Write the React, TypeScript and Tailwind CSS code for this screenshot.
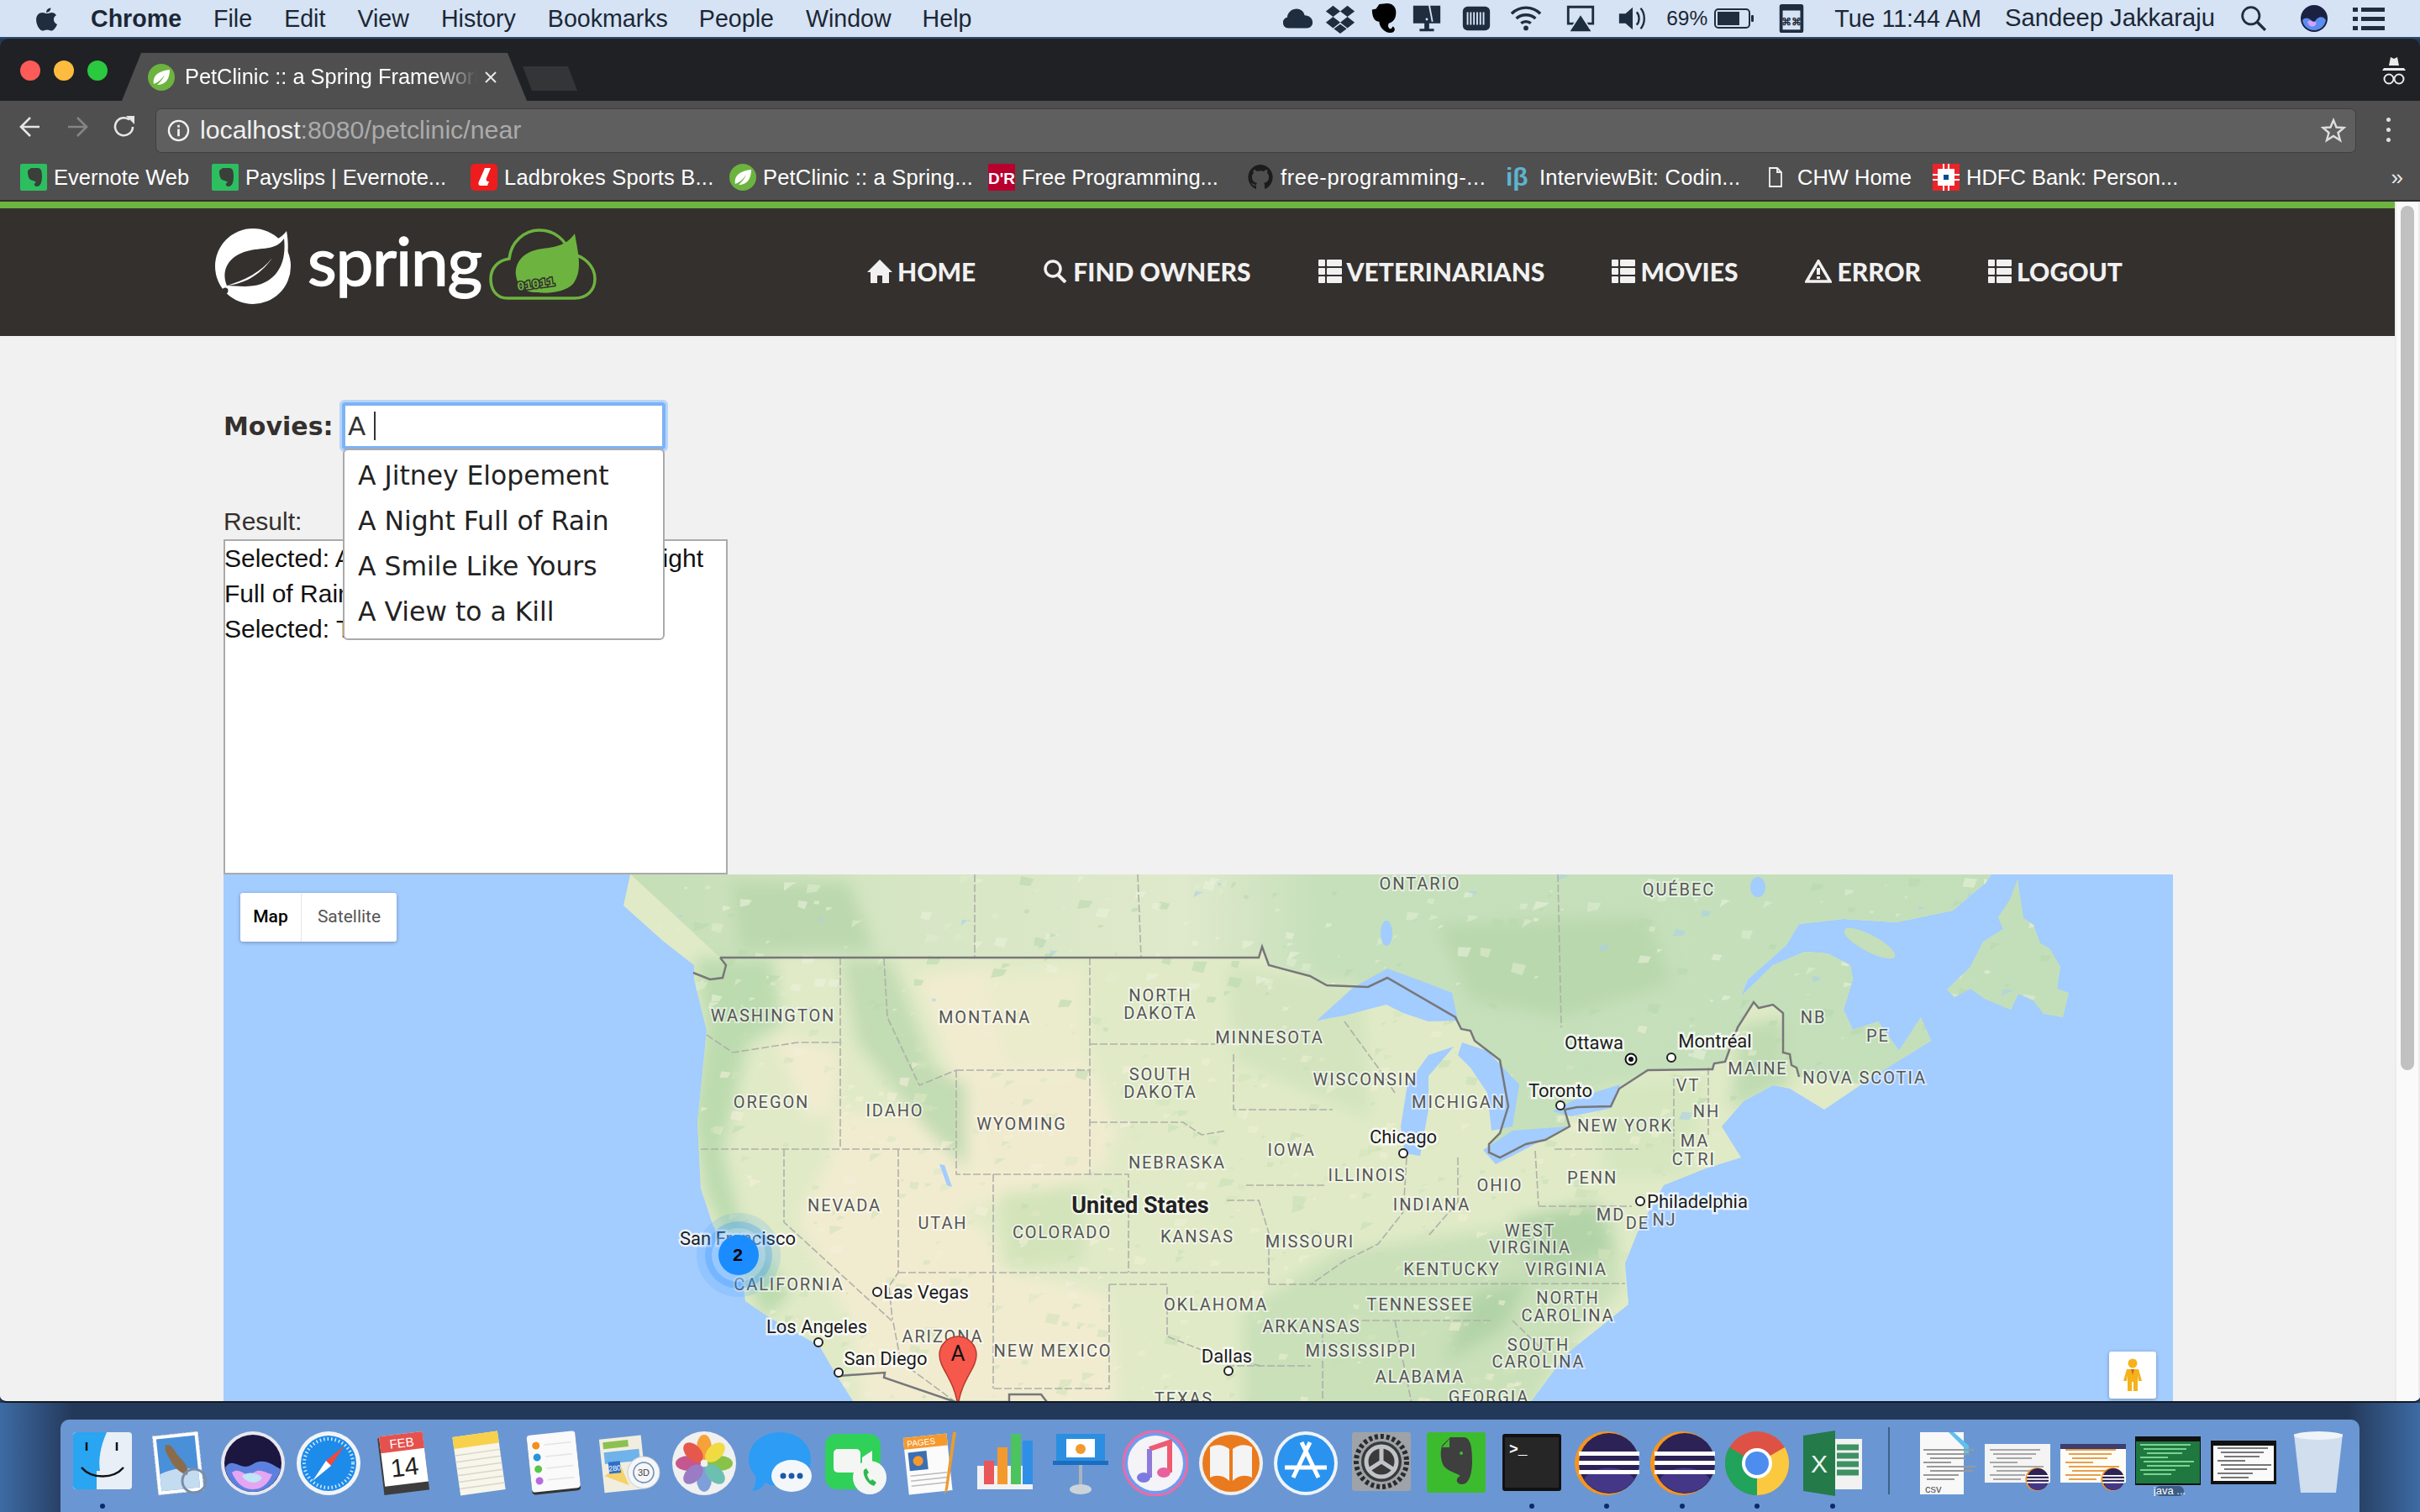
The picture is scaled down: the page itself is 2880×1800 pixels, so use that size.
import React from "react";

const LAND = "M750,1040 L742,1077 L790,1120 L826,1148 L826,1165 L841,1226 L830,1336 L834,1414 L849,1459 L880,1495 L887,1548 L918,1569 L975,1601 L994,1634 L1017,1670 L1820,1670 L1865,1610 L1938,1552 L1934,1503 L1950,1463 L1980,1410 L2030,1390 L2072,1377 L2049,1340 L2075,1310 L2110,1291 L2130,1295 L2171,1320 L2230,1280 L2298,1238 L2286,1210 L2260,1250 L2235,1215 L2205,1225 L2194,1201 L2205,1165 L2202,1148 L2175,1134 L2148,1132 L2110,1148 L2072,1185 L2080,1165 L2126,1124 L2141,1099 L2194,1093 L2256,1097 L2324,1083 L2363,1050 L2370,1040 Z";
const NEWF = "M2401,1046 L2392,1070 L2378,1091 L2384,1105 L2360,1120 L2345,1150 L2317,1177 L2326,1186 L2345,1176 L2362,1188 L2393,1201 L2402,1182 L2420,1190 L2432,1206 L2455,1210 L2462,1181 L2448,1176 L2452,1150 L2439,1128 L2428,1122 L2420,1100 L2408,1092 Z";
const BORDER = "857,1139 1498,1139 1502,1126 1510,1148 1559,1161 1579,1172 1628,1174 1651,1163 1732,1210 1739,1224 1750,1226 1755,1238 1785,1261 1795,1316 1785,1348 1772,1361 1772,1371 1785,1377 1816,1361 1839,1356 1868,1340 1862,1320 1877,1317 1917,1316 1927,1295 1961,1273 2038,1272 2040,1265 2053,1263 2068,1222 2087,1192 2093,1199 2110,1195 2122,1205 2122,1252 2130,1254 2132,1267 2138,1270 2141,1281";
const DASHED = [
  "841,1231 872,1252 949,1240 1002,1240",
  "1000,1139 1000,1367",
  "834,1367 1136,1367",
  "933,1367 933,1454 1063,1573 1072,1620 1137,1668",
  "1069,1367 1069,1514 1058,1530 1062,1570",
  "1182,1397 1182,1652",
  "1138,1273 1138,1397 1343,1397 1343,1514",
  "1138,1273 1297,1273",
  "1297,1139 1297,1397",
  "1069,1514 1460,1514",
  "1320,1528 1320,1652 1182,1652",
  "1320,1528 1389,1528 1389,1590 1440,1610 1500,1625",
  "1297,1242 1460,1242",
  "1297,1335 1408,1335 1430,1350 1460,1345",
  "1052,1140 1056,1210 1094,1291 1138,1273",
  "1160,1040 1160,1139",
  "1354,1040 1358,1139",
  "1468,1254 1468,1320 1586,1320",
  "1483,1410 1579,1410",
  "1460,1428 1498,1428 1510,1467 1510,1528",
  "1460,1514 1510,1514",
  "1510,1528 1934,1527",
  "1621,1571 1774,1571",
  "1460,1625 1560,1625",
  "1735,1377 1735,1430 1700,1470",
  "1674,1377 1670,1442 1640,1480 1600,1500 1560,1528",
  "1827,1369 1831,1434",
  "1850,1367 1950,1367",
  "1831,1435 1942,1435",
  "1992,1283 1992,1381",
  "2033,1270 2033,1350",
  "1854,1040 1858,1222",
  "1600,1215 1640,1270 1660,1300",
  "1574,1571 1574,1670",
  "1660,1571 1680,1670",
  "1800,1571 1840,1610",
];
const LABELS: [string, number, number][] = [
  ["ONTARIO", 1690, 1051], ["QUÉBEC", 1998, 1058], ["WASHINGTON", 920, 1208], ["MONTANA", 1172, 1210], ["NORTH", 1381, 1184], ["DAKOTA", 1381, 1205], ["MINNESOTA", 1511, 1234], ["WISCONSIN", 1625, 1284], ["MICHIGAN", 1736, 1311], ["OREGON", 918, 1311], ["IDAHO", 1065, 1321], ["SOUTH", 1381, 1278], ["DAKOTA", 1381, 1299], ["WYOMING", 1216, 1337], ["NEBRASKA", 1401, 1383], ["IOWA", 1537, 1368], ["ILLINOIS", 1627, 1398], ["OHIO", 1785, 1410], ["INDIANA", 1704, 1433], ["PENN", 1895, 1401], ["NEVADA", 1005, 1434], ["UTAH", 1122, 1455], ["COLORADO", 1264, 1466], ["KANSAS", 1425, 1471], ["MISSOURI", 1559, 1477], ["WEST", 1821, 1464], ["VIRGINIA", 1821, 1484], ["MD", 1917, 1445], ["DE", 1949, 1455], ["NJ", 1981, 1451], ["KENTUCKY", 1728, 1510], ["VIRGINIA", 1864, 1510], ["OKLAHOMA", 1447, 1552], ["TENNESSEE", 1690, 1552], ["NORTH", 1866, 1544], ["CAROLINA", 1866, 1565], ["ARKANSAS", 1561, 1578], ["MISSISSIPPI", 1620, 1607], ["ALABAMA", 1690, 1638], ["SOUTH", 1831, 1600], ["CAROLINA", 1831, 1620], ["GEORGIA", 1772, 1662], ["TEXAS", 1409, 1664], ["NEW MEXICO", 1253, 1607], ["ARIZONA", 1122, 1590], ["CALIFORNIA", 939, 1528], ["NB", 2158, 1210], ["PE", 2235, 1232], ["NOVA SCOTIA", 2219, 1282], ["MAINE", 2092, 1271], ["VT", 2009, 1291], ["NH", 2031, 1322], ["NEW YORK", 1934, 1339], ["MA", 2017, 1357], ["CT", 2004, 1379], ["RI", 2031, 1379],
];
const CITIES: [string, number, number][] = [
  ["Ottawa", 1897, 1240], ["Montréal", 2041, 1238], ["Toronto", 1857, 1297], ["Chicago", 1670, 1352], ["Philadelphia", 2020, 1429], ["San Francisco", 878, 1473], ["Las Vegas", 1102, 1537], ["Los Angeles", 972, 1578], ["San Diego", 1054, 1616], ["Dallas", 1460, 1613],
];
const DOTS: [number, number][] = [[1989, 1258], [1857, 1315], [1670, 1372], [1952, 1429], [1044, 1537], [974, 1597], [998, 1633], [1462, 1631]];

let seed = 12345;
const rnd = () => {
  seed = (seed * 16807) % 2147483647;
  return seed / 2147483647;
};
const SPECKS = Array.from({ length: 1100 }, (_, i) => {
  const x = 770 + rnd() * 1700;
  const y = 1040 + rnd() * 630;
  const s = 3 + rnd() * 13;
  const pts = `${x},${y} ${x + s},${y + s * 0.25 * rnd()} ${x + s * 0.7},${y + s * rnd()} ${x - s * 0.3 * rnd()},${y + s * 0.7}`;
  const c = y < 1200 || x > 2000 ? ["#dfeccf", "#b9d8ad", "#eaf1da", "#aad0e8"] : x < 1350 ? ["#d2e3ba", "#f3eed8", "#dde8c4", "#c3dcb2"] : ["#d4e5bd", "#ecefd2", "#c8dfb5", "#e6ebc9"];
  return { pts, c: c[i % 17 === 0 ? 3 : i % 3] };
});

const ThList = () => (
  <svg viewBox="0 0 28 28" className="w-[28px] h-[28px] fill-[#f1f1f1] shrink-0">
    <rect x="0" y="0" width="8" height="8" rx="1" /><rect x="10" y="0" width="18" height="8" rx="1" />
    <rect x="0" y="10" width="8" height="8" rx="1" /><rect x="10" y="10" width="18" height="8" rx="1" />
    <rect x="0" y="20" width="8" height="8" rx="1" /><rect x="10" y="20" width="18" height="8" rx="1" />
  </svg>
);

const NavItem = ({ icon, label }: { icon: React.ReactNode; label: string }) => (
  <div className="flex items-center gap-[6px] whitespace-nowrap text-[#f1f1f1] font-['Lato',sans-serif] font-black text-[30px] leading-none">
    {icon}
    <span>{label}</span>
  </div>
);

const Leaf = ({ className }: { className: string }) => (
  <svg viewBox="0 0 32 32" className={className}>
    <circle cx="16" cy="16" r="16" fill="#6db33f" />
    <path d="M7 24 C5 13 15 8 26 7 C26 18 21 25 11 25 C15 21 18 18 20 13 C17 18 12 22 7 24Z" fill="#ffffff" />
  </svg>
);

const Bookmark = ({ icon, label, w, ml }: { icon: React.ReactNode; label: string; w: string; ml: string }) => (
  <div className={`flex items-center gap-[8px] ${ml}`}>
    {icon}
    <span className={`whitespace-nowrap text-[25.5px] text-white ${w}`}>{label}</span>
  </div>
);

const EvernoteFav = () => (
  <svg viewBox="0 0 32 32" className="w-[32px] h-[32px] shrink-0">
    <rect width="32" height="32" rx="2" fill="#2dbe60" />
    <path d="M9 8 L13 5 H21 C25 5 26 9 26 15 C26 22 24 27 20 27 C16 27 16 23 19 22 C17 20 13 20 11 18 C9 15 9 11 9 8Z" fill="#3a3f3a" />
  </svg>
);

const Ic = ({ children }: { children: React.ReactNode }) => (
  <svg viewBox="0 0 40 40" className="w-[38px] h-[38px] fill-[#1f2d40] shrink-0">{children}</svg>
);

const Icon = ({ children }: { children: React.ReactNode }) => (
  <svg viewBox="0 0 78 78" className="w-[78px] h-[78px]">{children}</svg>
);

const DI = ({ children, dot }: { children: React.ReactNode; dot?: boolean }) => (
  <div className="w-[78px] flex flex-col items-center shrink-0">
    <Icon>{children}</Icon>
    <div className={`mt-[9px] w-[6px] h-[6px] rounded-full ${dot ? "bg-[#0c2a6b]" : "bg-transparent"}`} />
  </div>
);

const Eclipse = () => (
  <g>
    <circle cx="39" cy="39" r="38" fill="#f7941e" />
    <circle cx="42" cy="39" r="36" fill="#2c2255" />
    <path d="M12 58 A36 36 0 0 0 72 58 C60 40 24 40 12 58Z" fill="#453788" />
    <rect x="6" y="25" width="72" height="5" fill="#fff" /><rect x="6" y="36" width="72" height="5" fill="#fff" /><rect x="6" y="47" width="72" height="5" fill="#fff" />
  </g>
);

const Thumb = ({ bg, children }: { bg: string; children?: React.ReactNode }) => (
  <g>
    <rect x="0" y="16" width="78" height="46" fill={bg} />
    {children}
  </g>
);

const Lines = ({ c, x = 4 }: { c: string; x?: number }) => (
  <g fill={c}>
    {[22, 27, 32, 37, 42, 47, 52, 57].map((y, i) => (
      <rect key={y} x={x + (i % 3) * 4} y={y} width={60 - (i % 4) * 9} height="2" />
    ))}
  </g>
);

export default function App() {
  return (
    <div className="w-[2880px] h-[1800px] overflow-hidden flex flex-col font-['Liberation_Sans',sans-serif] bg-[#24395a]">
      {/* Menu bar */}
      <div className="h-[44px] shrink-0 bg-[#d5e3f4] border-b-[2px] border-[#2f4a70] flex items-center text-[#1c2735] text-[28.6px] leading-none box-content">
        <svg viewBox="0 0 24 28" className="w-[26px] h-[31px] ml-[42px] fill-[#1f2d40]"><path d="M17 2c0 3-2.500 5-5 5 0-3 2.500-5 5-5Zm-4 6c2 0 3-1 5-1 2 0 4 1 5 3-4 2-3.500 8 1 10-1 3-4 7-6 7s-2.500-1-5-1-3 1-5 1c-3 0-7-6-7-12 0-5 3-8 7-8 2 0 3 1 5 1Z" /></svg>
        <span className="ml-[40px] font-bold">Chrome</span>
        <span className="ml-[38px]">File</span>
        <span className="ml-[38px]">Edit</span>
        <span className="ml-[38px]">View</span>
        <span className="ml-[38px]">History</span>
        <span className="ml-[38px]">Bookmarks</span>
        <span className="ml-[37px]">People</span>
        <span className="ml-[38px]">Window</span>
        <span className="ml-[37px]">Help</span>
        <div className="ml-auto flex items-center mr-[42px]">
          <Ic><path d="M8 32c-5 0-7-3-7-7 0-4 3-6 5-6 1-7 6-11 12-11 6 0 9 4 10 8 6 0 10 4 10 9 0 4-3 7-7 7Z" /></Ic>
          <div className="ml-[12px]"><Ic><path d="M11 4 20 11 11 18 2 11ZM29 4 38 11 29 18 20 11ZM11 18 20 25 11 32 2 25ZM29 18 38 25 29 32 20 25ZM20 27 28 33 20 39 12 33Z" /></Ic></div>
          <div className="ml-[16px]"><Ic><path d="M12 2 8 8 3 9C3 18 6 24 12 24 C12 30 18 38 26 38 C32 38 33 32 29 30 L27 33 C24 33 22 30 24 26 C30 24 33 20 33 12 C33 5 28 1 22 1Z" fill="#000" /></Ic></div>
          <div className="ml-[11px]"><Ic><path d="M3 4H37V26H3ZM17 26H23V33H29V36H11V33H17Z" /><path d="M22 3 26 24 28 24 24 3Z" fill="#d5e3f4" /><circle cx="20" cy="21" r="1.500" fill="#d5e3f4" /></Ic></div>
          <div className="ml-[21px]"><Ic><rect x="3" y="5" width="34" height="30" rx="6" /><path d="M9 12V28M13 12V28M17 12V28M21 12V28M25 12V28M29 12V28" stroke="#d5e3f4" strokeWidth="2" /></Ic></div>
          <div className="ml-[21px]"><Ic><path d="M2 14C12 4 28 4 38 14M8 20C14 14 26 14 32 20M14 26C17 23 23 23 26 26" fill="none" stroke="#1f2d40" strokeWidth="3.500" /><circle cx="20" cy="32" r="3" /></Ic></div>
          <div className="ml-[27px]"><Ic><path d="M3 4H37V28H30L28 25H34V7H6V25H12L10 28H3Z" /><path d="M20 16 33 36H7Z" /></Ic></div>
          <div className="ml-[24px]"><Ic><path d="M3 14H11L20 6V34L11 26H3Z" /><path d="M25 12C29 16 29 24 25 28M30 7C36 14 36 26 30 33" fill="none" stroke="#1f2d40" strokeWidth="2.500" /></Ic></div>
          <span className="ml-[21px] text-[24.5px]">69%</span>
          <svg viewBox="0 0 48 28" className="ml-[8px] w-[48px] h-[28px]"><rect x="1" y="3" width="41" height="22" rx="4" fill="none" stroke="#1f2d40" strokeWidth="2" /><rect x="4" y="6" width="26" height="16" fill="#1f2d40" /><rect x="44" y="10" width="3" height="8" rx="1" fill="#1f2d40" /></svg>
          <div className="ml-[25px]"><Ic><rect x="5" y="2" width="30" height="36" rx="3" /><rect x="9" y="10" width="22" height="24" fill="#d5e3f4" /><text x="20" y="28" textAnchor="middle" className="text-[13px] font-bold fill-[#1f2d40]">⌘⌘</text></Ic></div>
          <span className="ml-[32px]">Tue 11:44 AM</span>
          <span className="ml-[28px] text-[29.2px]">Sandeep Jakkaraju</span>
          <svg viewBox="0 0 30 30" className="ml-[30px] w-[32px] h-[32px]"><circle cx="12" cy="12" r="9.500" fill="none" stroke="#1f2d40" strokeWidth="2.600" /><path d="M19 19 28 28" stroke="#1f2d40" strokeWidth="3.200" /></svg>
          <svg viewBox="0 0 32 32" className="ml-[40px] w-[32px] h-[32px]"><circle cx="16" cy="16" r="16" fill="#1b2140" /><path d="M2 18C10 10 14 24 18 18S28 14 30 18C28 28 20 30 16 30 8 30 3 24 2 18Z" fill="#5a8df0" /><path d="M8 20C12 16 14 22 18 20 20 24 14 28 10 24Z" fill="#d8a0ff" /></svg>
          <svg viewBox="0 0 38 30" className="ml-[30px] w-[38px] h-[30px] fill-[#1f2d40]"><rect x="0" y="2" width="6" height="5" /><rect x="10" y="2" width="28" height="5" /><rect x="0" y="13" width="6" height="5" /><rect x="10" y="13" width="28" height="5" /><rect x="0" y="24" width="6" height="5" /><rect x="10" y="24" width="28" height="5" /></svg>
        </div>
      </div>

      {/* Window */}
      <div className="h-[1624px] shrink-0 flex flex-col rounded-t-[10px] rounded-b-[8px] overflow-hidden border-b-[2px] border-[#111a26]">
        {/* Tab strip */}
        <div className="h-[74px] shrink-0 bg-[#202124] flex items-end relative">
          <div className="absolute left-[24px] top-[26px] flex gap-[16px]">
            <div className="w-[24px] h-[24px] rounded-full bg-[#fc5b57]" />
            <div className="w-[24px] h-[24px] rounded-full bg-[#fdbc40]" />
            <div className="w-[24px] h-[24px] rounded-full bg-[#2ac940]" />
          </div>
          <div className="ml-[145px] w-[482px] h-[57px] bg-[#4f4f4f] [clip-path:polygon(23px_0,459px_0,482px_100%,0_100%)] flex items-center pl-[31px] text-white">
            <Leaf className="w-[32px] h-[32px] shrink-0" />
            <span className="ml-[12px] w-[348px] overflow-hidden whitespace-nowrap text-[25.4px] [mask-image:linear-gradient(to_right,black_85%,transparent)]">PetClinic :: a Spring Framework</span>
            <svg viewBox="0 0 16 16" className="ml-[8px] w-[16px] h-[16px]"><path d="M2 2 14 14M14 2 2 14" stroke="#e8e8e8" strokeWidth="2" /></svg>
          </div>
          <div className="ml-[-5px] mb-[12px] w-[65px] h-[29px] bg-[#343536] [clip-path:polygon(0_0,54px_0,65px_100%,11px_100%)]" />
          <svg viewBox="0 0 30 34" className="absolute right-[16px] top-[22px] w-[30px] h-[34px] fill-[#eaeaea]"><path d="M11 0 15 2 19 0 21 10H9ZM3 13H27L29 16H1Z" /><circle cx="9" cy="26" r="5.500" fill="none" stroke="#eaeaea" strokeWidth="2" /><circle cx="21" cy="26" r="5.500" fill="none" stroke="#eaeaea" strokeWidth="2" /></svg>
        </div>
        {/* Toolbar */}
        <div className="h-[62px] shrink-0 bg-[#4f4f4f] flex items-center">
          <svg viewBox="0 0 30 30" className="ml-[21px] w-[30px] h-[30px]"><path d="M26 15H4M15 4 4 15 15 26" fill="none" stroke="#e6e6e6" strokeWidth="2.600" /></svg>
          <svg viewBox="0 0 30 30" className="ml-[26px] w-[30px] h-[30px]"><path d="M4 15H26M15 4 26 15 15 26" fill="none" stroke="#858585" strokeWidth="2.600" /></svg>
          <svg viewBox="0 0 30 30" className="ml-[26px] w-[30px] h-[30px]"><path d="M25 15A10.500 10.500 0 1 1 21 6.500" fill="none" stroke="#e6e6e6" strokeWidth="2.600" /><path d="M17 2H27V12Z" fill="#e6e6e6" /></svg>
          <div className="ml-[22px] w-[2619px] h-[53px] mt-[8px] bg-[#5f5f5f] border border-[#3f3f3f] rounded-[7px] flex items-center pl-[13px]">
            <svg viewBox="0 0 28 28" className="w-[27px] h-[27px] shrink-0"><circle cx="14" cy="14" r="12" fill="none" stroke="#f2f2f2" strokeWidth="2.400" /><rect x="12.600" y="12" width="2.800" height="9" fill="#f2f2f2" /><rect x="12.600" y="7" width="2.800" height="3" fill="#f2f2f2" /></svg>
            <span className="ml-[12px] text-[30.3px] text-[#f0f0f0]">localhost<span className="text-[#ababab]">:8080/petclinic/near</span></span>
            <svg viewBox="0 0 30 30" className="ml-auto mr-[11px] w-[30px] h-[30px]"><path d="M15 3 18.500 11.500 27.500 12 20.500 18 23 27 15 22 7 27 9.500 18 2.500 12 11.500 11.500Z" fill="none" stroke="#dedede" strokeWidth="2.400" /></svg>
          </div>
          <div className="ml-[36px] flex flex-col gap-[7px] mt-[6px]">
            <div className="w-[5px] h-[5px] rounded-full bg-[#e0e0e0]" /><div className="w-[5px] h-[5px] rounded-full bg-[#e0e0e0]" /><div className="w-[5px] h-[5px] rounded-full bg-[#e0e0e0]" />
          </div>
        </div>
        {/* Bookmarks */}
        <div className="h-[58px] shrink-0 bg-[#4f4f4f] border-b-[2px] border-[#2e2e2e] flex items-center pl-[24px] pt-[2px]">
          <Bookmark ml="" w="w-[162px]" label="Evernote Web" icon={<EvernoteFav />} />
          <Bookmark ml="ml-[26px]" w="w-[240px]" label="Payslips | Evernote..." icon={<EvernoteFav />} />
          <Bookmark ml="ml-[28px]" w="w-[248px] tracking-[0.2px]" label="Ladbrokes Sports B..." icon={<svg viewBox="0 0 32 32" className="w-[32px] h-[32px] shrink-0"><rect width="32" height="32" rx="5" fill="#ee1c1c" /><path d="M17 5H24L19 17C18 20 19 21 22 21L20 26H12C9 26 9 23 10 21Z" fill="#fff" /></svg>} />
          <Bookmark ml="ml-[20px]" w="w-[248px] tracking-[0.2px]" label="PetClinic :: a Spring..." icon={<Leaf className="w-[32px] h-[32px] shrink-0" />} />
          <Bookmark ml="ml-[20px]" w="w-[233px]" label="Free Programming..." icon={<svg viewBox="0 0 32 32" className="w-[32px] h-[32px] shrink-0"><rect width="32" height="32" fill="#b8002f" /><text x="16" y="24" textAnchor="middle" className="text-[19px] font-bold fill-white">D'R</text></svg>} />
          <Bookmark ml="ml-[35px]" w="w-[243px] tracking-[0.6px]" label="free-programming-..." icon={<svg viewBox="0 0 32 32" className="w-[32px] h-[32px] shrink-0"><path d="M16 1A15 15 0 0 0 11 30V26C7 27 6 24 5 23 9 24 9 26 11 25 11 24 12 23 12 23 8 22 6 20 6 15 6 13 7 12 8 11 7 9 8 7 8 7 10 7 12 9 12 9 15 8 17 8 20 9 20 9 22 7 24 7 24 7 25 9 24 11 25 12 26 13 26 15 26 20 24 22 20 23 21 24 21 25 21 26V30A15 15 0 0 0 16 1Z" fill="#1c1c1c" /></svg>} />
          <Bookmark ml="ml-[25px]" w="w-[240px] tracking-[0.25px]" label="InterviewBit: Codin..." icon={<span className="w-[32px] text-[30px] leading-none text-[#5fb3d0] font-bold shrink-0 whitespace-nowrap">iβ</span>} />
          <Bookmark ml="ml-[33px]" w="w-[134px]" label="CHW Home" icon={<svg viewBox="0 0 16 24" className="w-[16px] h-[24px] shrink-0 mr-[10px]"><path d="M1 1H10L15 6V23H1Z M10 1V6H15" fill="none" stroke="#f2f2f2" strokeWidth="1.800" /></svg>} />
          <Bookmark ml="ml-[27px]" w="w-[246px]" label="HDFC Bank: Person..." icon={<svg viewBox="0 0 32 32" className="w-[32px] h-[32px] shrink-0"><rect width="32" height="32" fill="#ed232a" /><rect x="6" y="6" width="20" height="20" fill="#fff" /><path d="M13 0V32M19 0V32M0 13H32M0 19H32" stroke="#fff" strokeWidth="2" /><rect x="11" y="11" width="10" height="10" fill="#fff" /><rect x="13" y="13" width="6" height="6" fill="#004c8f" /></svg>} />
          <span className="ml-auto mr-[20px] text-[26px] text-[#e8e8e8]">»</span>
        </div>

        {/* Page */}
        <div className="flex-1 min-h-0 flex bg-[#f1f1f1]">
          <div className="w-[2850px] shrink-0 flex flex-col min-h-0 overflow-hidden">
            <header className="h-[160px] shrink-0 bg-[#34302d] border-t-[8px] border-[#6db33f] flex">
              <div className="ml-[256px] mt-[24px] flex items-start w-[454px] shrink-0">
                <svg viewBox="0 0 90 90" className="w-[90px] h-[90px] shrink-0">
                  <circle cx="45" cy="45" r="45" fill="#ffffff" />
                  <path d="M85 3 C90 30 85 60 62 72 C50 78 30 78 20 80 L9 70 C5 50 15 28 35 22 C55 16 72 20 85 3Z" fill="#ffffff" />
                  <path d="M14 68 C6 48 18 32 38 27 C55 22 72 27 82 12 C85 38 76 58 55 66 C40 71 25 68 14 68 C32 66 52 58 68 35 C55 52 34 62 14 68Z" fill="#34302d" />
                  <circle cx="12" cy="74" r="3.500" fill="#34302d" />
                </svg>
                <span className="ml-[20px] mt-[-18px] text-white text-[80px] leading-[110px] font-['Lato',sans-serif] tracking-[-1.2px] [-webkit-text-stroke:1.5px_white]">spring</span>
                <svg viewBox="0 0 128 86" className="ml-[9px] w-[128px] h-[86px] shrink-0">
                  <path d="M22 83C8 83 2 72 2 60 2 48 10 38 24 36 26 16 42 2 60 2 78 2 92 14 96 30 112 32 126 44 126 60 126 74 116 83 102 83Z" fill="none" stroke="#6db33f" strokeWidth="3.500" />
                  <path d="M102 6C106 30 112 50 100 66 90 76 70 78 58 76 44 77 34 70 32 56 30 38 44 26 64 24 80 22 92 20 102 6Z" fill="#6db33f" />
                  <text x="34" y="74" className="text-[15px] font-bold fill-[#6db33f] stroke-[#34302d] [stroke-width:3px] [paint-order:stroke] font-['Liberation_Mono',monospace]" transform="rotate(-8 34 74)">01011</text>
                </svg>
              </div>
              <nav className="ml-[322px] flex items-center gap-[80px] h-[136px] mt-[7px]">
                <NavItem label="HOME" icon={<svg viewBox="0 0 30 28" className="w-[30px] h-[28px] fill-[#f1f1f1] shrink-0"><path d="M15 0 30 15H26V28H18V19H12V28H4V15H0Z" /></svg>} />
                <NavItem label="FIND OWNERS" icon={<svg viewBox="0 0 30 28" className="w-[30px] h-[28px] shrink-0"><circle cx="12" cy="11" r="9" fill="none" stroke="#f1f1f1" strokeWidth="3.500" /><path d="M18 18 27 27" stroke="#f1f1f1" strokeWidth="4" /></svg>} />
                <NavItem label="VETERINARIANS" icon={<ThList />} />
                <NavItem label="MOVIES" icon={<ThList />} />
                <NavItem label="ERROR" icon={<svg viewBox="0 0 32 28" className="w-[32px] h-[28px] shrink-0"><path d="M16 2 30 26H2Z" fill="none" stroke="#f1f1f1" strokeWidth="3.500" /><rect x="14" y="10" width="4" height="8" fill="#f1f1f1" /><rect x="14" y="20" width="4" height="3" fill="#f1f1f1" /></svg>} />
                <NavItem label="LOGOUT" icon={<ThList />} />
              </nav>
            </header>

            <div className="pl-[266px] flex-1 min-h-0 flex flex-col">
              <div className="mt-[79px] flex items-center h-[56px] shrink-0">
                <span className="w-[141px] font-['DejaVu_Sans',sans-serif] font-bold text-[30px] text-[#34302d]">Movies:</span>
                <div className="relative w-[385px] h-[56px]">
                  <div className="w-full h-full bg-white border-[4px] border-[#7db3f5] outline-[3px] outline-[#b5d5fb] rounded-[3px] flex items-center pl-[3px] font-['DejaVu_Sans',sans-serif] text-[31px] text-[#333]">
                    A <span className="ml-[10px] w-[2px] h-[34px] bg-[#333]" />
                  </div>
                  <div className="absolute left-[1px] top-[55px] w-[383px] h-[228px] z-10 bg-white border-[2px] border-[#aaaaaa] rounded-[6px] pt-[3px] pl-[16px] font-['DejaVu_Sans',sans-serif] text-[31.4px] text-[#222] leading-[54px]">
                    <div>A Jitney Elopement</div>
                    <div>A Night Full of Rain</div>
                    <div>A Smile Like Yours</div>
                    <div>A View to a Kill</div>
                  </div>
                </div>
              </div>
              <div className="mt-[68px] text-[30px] leading-[36px] text-[#34302d] shrink-0">Result:</div>
              <div className="mt-[3px] w-[600px] h-[399px] shrink-0 bg-white border-[2px] border-[#aaaaaa] text-[30px] leading-[42px] text-[#111] overflow-hidden">
                <div className="ml-[-1px]">
                  <div className="flex justify-between w-[570px]"><span>Selected: A Jitney Elopement,</span><span>A Night</span></div>
                  <div>Full of Rain</div>
                  <div>Selected: The Godfather</div>
                </div>
              </div>
              <div className="relative w-[2320px] h-[640px] shrink-0 overflow-hidden bg-[#a3ccff]">
                <svg viewBox="266 1040 2320 640" className="w-[2320px] h-[640px]">
                  <defs>
                    <clipPath id="land"><path d={LAND} /><path d={NEWF} /></clipPath>
                    <filter id="soft"><feGaussianBlur stdDeviation="9" /></filter>
                    <linearGradient id="canada" x1="750" x2="2400" y1="0" y2="0" gradientUnits="userSpaceOnUse">
                      <stop offset="0" stopColor="#c4deb6" /><stop offset="0.2" stopColor="#d6e6c4" /><stop offset="0.4" stopColor="#dfe9cb" /><stop offset="0.5" stopColor="#c6e0bb" /><stop offset="1" stopColor="#c3dfba" />
                    </linearGradient>
                  </defs>
                  <path d={LAND} fill="#e0eac7" />
                  <path d={NEWF} fill="#c4dfba" />
                  <ellipse cx="2225" cy="1122" rx="34" ry="10" fill="#c4dfba" transform="rotate(28 2225 1122)" />
                  <g clipPath="url(#land)">
                    <polygon points={`740,1030 2480,1030 2480,1320 2141,1281 ${BORDER.split(" ").reverse().join(" ")}`} fill="url(#canada)" />
                    <g filter="url(#soft)">
                      <polygon points="920,1230 1000,1250 990,1370 950,1450 1010,1570 1030,1680 1190,1680 1330,1680 1320,1540 1190,1510 1180,1470 1140,1440 1300,1400 1330,1350 1290,1240 1180,1150 1090,1160 1130,1270 1100,1300 1060,1330 1010,1320 960,1330" fill="#f1ecd0" />
                      <polygon points="1150,1290 1290,1280 1320,1390 1180,1400" fill="#f0ebcf" />
                      <polygon points="1170,1160 1290,1150 1300,1260 1200,1270" fill="#eaeccc" />
                      <polygon points="826,1140 920,1140 930,1220 890,1240 860,1370 880,1450 940,1540 910,1570 880,1500 840,1420 825,1330 840,1220" fill="#bcdbaf" />
                      <polygon points="1000,1140 1060,1140 1110,1270 1150,1290 1150,1390 1100,1340 1060,1290 1020,1240" fill="#c2dcb3" />
                      <polygon points="1190,1420 1290,1410 1290,1500 1200,1510" fill="#d3e4ba" />
                      <polygon points="1460,1150 1620,1170 1630,1330 1560,1300 1470,1260" fill="#d3e4bf" />
                      <polygon points="1590,1490 1800,1460 1920,1440 1930,1530 1860,1610 1820,1680 1480,1680 1480,1560" fill="#c9e0b9" />
                      <polygon points="1800,1450 1900,1430 1920,1490 1830,1520" fill="#b2d3a7" />
                      <polygon points="1750,1540 1820,1520 1790,1580 1720,1620" fill="#b2d3a7" />
                      <polygon points="1900,1290 2030,1280 2010,1400 1910,1400" fill="#d6e7c0" />
                      <polygon points="1710,1100 1960,1090 1990,1170 1860,1210 1750,1190" fill="#bad8ae" />
                      <polygon points="2070,1220 2125,1210 2130,1290 2060,1320" fill="#c0dbb2" />
                      <polygon points="870,1050 1010,1050 1040,1130 880,1130" fill="#bbd8ae" />
                    </g>
                    <g>{SPECKS.map((s, i) => <polygon key={i} points={s.pts} fill={s.c} opacity="0.6" />)}</g>
                  </g>
                  {/* Lakes */}
                  <g fill="#a3ccff">
                    <path d="M1567,1214 L1610,1175 L1651,1152 L1700,1170 L1728,1181 L1735,1214 L1700,1215 L1670,1205 L1650,1195 L1630,1200 L1600,1208Z" />
                    <path d="M1667,1340 L1675,1290 L1700,1255 L1730,1245 L1700,1280 L1700,1320 L1690,1375 L1672,1372Z" />
                    <path d="M1740,1240 L1770,1250 L1808,1290 L1800,1340 L1775,1345 L1770,1300 L1750,1270 L1735,1255Z" />
                    <path d="M1765,1368 L1800,1345 L1866,1340 L1800,1375 L1780,1385Z" />
                    <path d="M1848,1322 L1880,1305 L1928,1290 L1918,1318 L1870,1328Z" />
                    <path d="M1118,1385 L1124,1386 L1133,1412 L1127,1410Z" />
                    <ellipse cx="1650" cy="1110" rx="7" ry="15" /><ellipse cx="2092" cy="1055" rx="9" ry="12" />
                  </g>
                  <g fill="none" stroke="#b0b0aa" strokeWidth="1.600" strokeDasharray="9 3">
                    {DASHED.map((d) => <polyline key={d} points={d} />)}
                  </g>
                  <polyline points={BORDER} fill="none" stroke="#77777a" strokeWidth="2.500" />
                  <polyline points="857,1139 864,1148 860,1163 845,1165 825,1157" fill="none" stroke="#77777a" strokeWidth="2.500" />
                  <polyline points="998,1637 1053,1633 1052,1639 1137,1668 1201,1668 1201,1659 1239,1659 1255,1680" fill="none" stroke="#77777a" strokeWidth="2.500" />
                  {LABELS.map(([t, x, y], i) => (
                    <text key={i} x={x} y={y} textAnchor="middle" dominantBaseline="central" className="font-['Roboto',sans-serif] text-[20px] tracking-[1.9px] fill-[#565656] stroke-[#ffffff] [stroke-width:4px] [stroke-opacity:0.55] [paint-order:stroke]">{t}</text>
                  ))}
                  <text x="1357" y="1434" textAnchor="middle" dominantBaseline="central" className="font-['Roboto',sans-serif] font-bold text-[27px] fill-[#222] stroke-[#ffffff] [stroke-width:4px] [stroke-opacity:0.7] [paint-order:stroke]">United States</text>
                  {CITIES.map(([t, x, y]) => (
                    <text key={t} x={x} y={y} textAnchor="middle" dominantBaseline="central" className="font-['Roboto',sans-serif] text-[22px] fill-[#1c1c1c] stroke-[#ffffff] [stroke-width:5px] [stroke-opacity:0.75] [paint-order:stroke]">{t}</text>
                  ))}
                  {DOTS.map(([x, y]) => <circle key={x} cx={x} cy={y} r="5" fill="#ffffff" stroke="#222" strokeWidth="2" />)}
                  <circle cx="1941" cy="1260" r="6.500" fill="#fff" stroke="#111" strokeWidth="2" /><circle cx="1941" cy="1260" r="3" fill="#111" />
                  {/* Cluster */}
                  <circle cx="879" cy="1493" r="50" fill="#2b93ff" opacity="0.14" />
                  <circle cx="879" cy="1493" r="40" fill="#2b93ff" opacity="0.28" />
                  <circle cx="879" cy="1493" r="32" fill="#ffffff" opacity="0.25" />
                  <circle cx="879" cy="1493" r="24" fill="#1a8cff" />
                  <text x="878" y="1492" textAnchor="middle" dominantBaseline="central" className="font-['Liberation_Sans',sans-serif] font-bold text-[21px] fill-black">2</text>
                  {/* Marker */}
                  <path d="M1140 1590C1128 1590 1118 1600 1118 1612 1118 1628 1135 1640 1140 1672 1145 1640 1162 1628 1162 1612 1162 1600 1152 1590 1140 1590Z" fill="#f7584c" stroke="#b93a2e" strokeWidth="1.500" />
                  <text x="1140" y="1610" textAnchor="middle" dominantBaseline="central" className="font-['Roboto',sans-serif] text-[26px] fill-[#111]">A</text>
                </svg>
                <div className="absolute left-[20px] top-[22px] h-[58px] flex bg-white rounded-[3px] shadow-[0_1px_4px_rgba(0,0,0,0.3)] font-['Roboto',sans-serif] text-[21px]">
                  <div className="w-[73px] flex items-center justify-center font-medium text-black border-r border-[#e6e6e6]">Map</div>
                  <div className="w-[113px] flex items-center justify-center text-[#565656]">Satellite</div>
                </div>
                <div className="absolute left-[2244px] top-[568px] w-[56px] h-[56px] bg-white rounded-[3px] shadow-[0_1px_4px_rgba(0,0,0,0.3)] flex items-center justify-center">
                  <svg viewBox="0 0 24 40" className="w-[24px] h-[40px]"><circle cx="12" cy="6" r="5.500" fill="#f5b21b" /><path d="M5 13H19L23 27H19L18 20 18 39H13V28H11V39H6V20L5 27H1Z" fill="#f5b21b" /><path d="M10 13H14L12 20Z" fill="#d8641e" /></svg>
                </div>
              </div>
            </div>
          </div>
          <div className="w-[30px] shrink-0 bg-[#fafafa] border-x-[2px] border-[#ececec] flex justify-center">
            <div className="mt-[5px] w-[16px] h-[1029px] rounded-full bg-[#c1c1c1]" />
          </div>
        </div>
      </div>

      {/* Dock */}
      <div className="flex-1 min-h-0 bg-[linear-gradient(to_right,#3d6ba4,#24395a_3%,#24395a_97%,#3d6ba4)] pt-[20px] pl-[72px]">
        <div className="w-[2736px] h-[120px] bg-[#6a97d3] rounded-t-[10px] flex gap-[11.5px] pl-[11px] pt-[13px]">
          <DI dot><rect x="4" y="2" width="70" height="68" rx="4" fill="#e9eff6" /><path d="M8 2H44C36 20 34 36 36 48H32V70H8C6 70 4 68 4 66V6C4 4 6 2 8 2Z" fill="#29a5f2" /><path d="M20 14V24M56 14V24" stroke="#111" strokeWidth="2.500" /><path d="M14 44C26 58 52 58 64 44" fill="none" stroke="#111" strokeWidth="2.500" /></DI>
          <DI><g transform="rotate(-6 39 39)"><rect x="12" y="4" width="54" height="70" fill="#fff" stroke="#ddd" strokeDasharray="3 2" /><rect x="16" y="8" width="46" height="62" fill="#4a90d9" /><path d="M16 50C30 44 50 44 62 50V70H16Z" fill="#c4dcf0" /><path d="M26 16C34 14 36 24 40 30 48 40 52 48 48 54 40 50 34 44 30 34 28 28 24 24 26 16Z" fill="#8a6c4a" /></g><circle cx="58" cy="60" r="14" fill="none" stroke="#7a8da8" strokeWidth="3" /></DI>
          <DI><circle cx="39" cy="39" r="38" fill="#e8e8ee" /><circle cx="39" cy="39" r="34" fill="#1b1740" /><path d="M6 44C16 30 24 50 39 40 50 32 62 40 72 46 68 62 54 73 39 73 22 73 8 60 6 44Z" fill="#5d80e0" /><path d="M14 50C24 42 30 58 40 50 48 44 56 52 62 52 56 66 48 70 38 70 26 70 18 60 14 50Z" fill="#e4a6f2" /><path d="M26 54C34 48 44 50 50 56 46 64 32 64 26 54Z" fill="#bfe6f6" /></DI>
          <DI><circle cx="39" cy="39" r="38" fill="#f2f4f6" /><circle cx="39" cy="39" r="33" fill="#1d8bea" /><circle cx="39" cy="39" r="29" fill="none" stroke="#d5ecfc" strokeWidth="4" strokeDasharray="1.500 3" /><path d="M58 18 42 42 36 36Z" fill="#f0483e" /><path d="M20 60 36 36 42 42Z" fill="#fff" /></DI>
          <DI><g transform="rotate(-7 39 39)"><rect x="12" y="6" width="54" height="68" fill="#3d3d3d" /><rect x="14" y="4" width="52" height="60" fill="#fff" /><rect x="14" y="4" width="52" height="20" fill="#e5524e" /><text x="40" y="20" textAnchor="middle" className="text-[15px] fill-white">FEB</text><text x="40" y="54" textAnchor="middle" className="text-[30px] fill-[#222]">14</text></g></DI>
          <DI><g transform="rotate(-8 39 39)"><rect x="12" y="4" width="54" height="70" fill="#f8f6ea" /><rect x="12" y="4" width="54" height="14" fill="#f7d14c" /><path d="M12 26H66M12 34H66M12 42H66M12 50H66M12 58H66M12 66H66" stroke="#d8d6cc" strokeWidth="1.500" /></g></DI>
          <DI><g transform="rotate(-6 39 39)"><rect x="10" y="4" width="58" height="70" rx="4" fill="#333" /><rect x="10" y="3" width="58" height="68" rx="4" fill="#fafafa" /><circle cx="20" cy="16" r="4.500" fill="#f78d1e" /><circle cx="20" cy="30" r="4.500" fill="#2a95d8" /><circle cx="20" cy="44" r="4.500" fill="#5ac648" /><circle cx="20" cy="58" r="4.500" fill="#b76ae0" /><path d="M30 16H62M30 30H62M30 44H62M30 58H62" stroke="#e4e4e4" strokeWidth="1.500" /></g></DI>
          <DI><g transform="rotate(-6 30 39)"><rect x="6" y="8" width="50" height="64" fill="#f1eee0" /><rect x="10" y="12" width="30" height="8" fill="#8cc152" /><rect x="10" y="24" width="42" height="14" fill="#6fb3ea" /><path d="M8 52 28 40 36 66Z" fill="#f5d26a" /><rect x="14" y="36" width="14" height="14" fill="#2f6fc8" /><text x="21" y="47" textAnchor="middle" className="text-[9px] fill-white">280</text></g><circle cx="56" cy="50" r="19" fill="#f4f6f8" stroke="#c8ccd0" /><circle cx="56" cy="50" r="12" fill="none" stroke="#6a8db0" strokeWidth="1.500" /><text x="56" y="54" textAnchor="middle" className="text-[11px] fill-[#444]">3D</text></DI>
          <DI><circle cx="39" cy="39" r="38" fill="#f0f0f0" /><ellipse cx="39" cy="20" rx="9" ry="15" fill="#f6a13a" /><ellipse cx="39" cy="58" rx="9" ry="15" fill="#7e9fd8" /><ellipse cx="20" cy="39" rx="15" ry="9" fill="#c5578e" /><ellipse cx="58" cy="39" rx="15" ry="9" fill="#88c249" /><ellipse cx="26" cy="26" rx="9" ry="14" transform="rotate(-45 26 26)" fill="#e6584c" /><ellipse cx="52" cy="26" rx="9" ry="14" transform="rotate(45 52 26)" fill="#f0dc42" /><ellipse cx="26" cy="52" rx="9" ry="14" transform="rotate(45 26 52)" fill="#9a7bc4" /><ellipse cx="52" cy="52" rx="9" ry="14" transform="rotate(-45 52 52)" fill="#6dbfb0" /></DI>
          <DI><path d="M39 2C60 2 76 16 76 34 76 52 60 66 39 66 33 66 27 65 22 62 18 68 12 72 6 72 10 68 11 60 10 54 5 48 2 42 2 34 2 16 18 2 39 2Z" fill="#2c9cf5" /><ellipse cx="53" cy="54" rx="24" ry="19" fill="#f4f7fa" /><circle cx="43" cy="54" r="3.500" fill="#1a5aa8" /><circle cx="53" cy="54" r="3.500" fill="#1a5aa8" /><circle cx="63" cy="54" r="3.500" fill="#1a5aa8" /></DI>
          <DI><rect x="4" y="4" width="66" height="66" rx="14" fill="#2fd158" /><rect x="14" y="22" width="32" height="28" rx="5" fill="#f4f6f4" /><path d="M48 32 60 24V48L48 40Z" fill="#f4f6f4" /><circle cx="57" cy="56" r="20" fill="#f4f6f4" /><path d="M50 47C48 52 54 64 62 66L65 62 60 58 58 60C56 58 54 54 54 52L56 50 53 45Z" fill="#2fb84f" /></DI>
          <DI><g transform="rotate(-6 36 39)"><rect x="10" y="6" width="52" height="68" fill="#fbfbfb" /><rect x="10" y="6" width="52" height="14" fill="#f6992d" /><text x="14" y="17" className="text-[10px] fill-white">PAGES</text><rect x="14" y="24" width="22" height="22" fill="#3b6fb4" /><circle cx="25" cy="35" r="6" fill="#f6992d" /><path d="M14 52H58M14 58H58M14 64H58" stroke="#bbb" strokeWidth="1.500" /></g><path d="M70 2 60 70 56 76 57 68 66 2Z" fill="#ee9b2e" /></DI>
          <DI><rect x="6" y="42" width="66" height="28" fill="#f2f2f2" /><rect x="14" y="36" width="12" height="28" fill="#e9575a" /><rect x="30" y="20" width="12" height="44" fill="#f39a2e" /><rect x="46" y="4" width="12" height="60" fill="#4cc45e" /><rect x="60" y="12" width="12" height="52" fill="#2f8fe6" /></DI>
          <DI><rect x="10" y="4" width="58" height="34" fill="#2b8ee0" /><rect x="22" y="10" width="34" height="22" fill="#fff" /><circle cx="39" cy="22" r="6" fill="#f39a2e" /><rect x="6" y="36" width="66" height="5" fill="#1a6dc0" /><rect x="37" y="41" width="4" height="26" fill="#aab4bd" /><ellipse cx="39" cy="70" rx="13" ry="6" fill="#ccd4da" /></DI>
          <DI><circle cx="39" cy="39" r="38" fill="#6e9cf0" /><circle cx="39" cy="39" r="38" fill="none" stroke="#e86ca8" strokeWidth="3" /><circle cx="39" cy="39" r="33" fill="#f4f4f8" /><path d="M32 22 56 14V50" fill="none" stroke="#f05a70" strokeWidth="6" /><path d="M32 22V56" stroke="#8e7ad8" strokeWidth="6" /><ellipse cx="25" cy="56" rx="8" ry="6" fill="#7c7ae0" /><ellipse cx="49" cy="50" rx="8" ry="6" fill="#e860a0" /></DI>
          <DI><circle cx="39" cy="39" r="38" fill="#f0f0f0" /><circle cx="39" cy="39" r="34" fill="#ea7a1e" /><path d="M37 22C30 16 20 16 14 20V56C22 52 30 53 37 60ZM41 22C48 16 58 16 64 20V56C56 52 48 53 41 60Z" fill="#f4f4f4" /></DI>
          <DI><circle cx="39" cy="39" r="38" fill="#f0f4f8" /><circle cx="39" cy="39" r="34" fill="#2a93f0" /><path d="M44 14 24 56M34 14 54 56M14 44H64" stroke="#fff" strokeWidth="5" /></DI>
          <DI><rect x="4" y="2" width="70" height="70" rx="3" fill="#9da3a8" /><circle cx="39" cy="37" r="30" fill="none" stroke="#2a2a2a" strokeWidth="6" strokeDasharray="4 3" /><circle cx="39" cy="37" r="24" fill="#3a3a3a" /><circle cx="39" cy="37" r="18" fill="none" stroke="#c0c4c8" strokeWidth="5" /><path d="M39 37V17M39 37 22 48M39 37 56 48" stroke="#c0c4c8" strokeWidth="5" /></DI>
          <DI><rect x="4" y="2" width="70" height="72" rx="3" fill="#3dbb2f" /><path d="M22 18 32 8H48C56 8 58 20 58 36 58 52 54 64 46 64 38 64 38 56 44 54 38 50 28 48 24 42 20 34 20 26 22 18Z" fill="#3f3f3f" /><path d="M22 20H31V10Z" fill="#3dbb2f" /><circle cx="45" cy="27" r="2" fill="#3dbb2f" /></DI>
          <DI dot><rect x="4" y="4" width="70" height="68" rx="3" fill="#111" /><rect x="7" y="8" width="64" height="60" fill="#262626" /><text x="12" y="28" className="text-[18px] font-bold fill-white font-['Liberation_Mono',monospace]">&gt;_</text></DI>
          <DI dot><Eclipse /></DI>
          <DI dot><Eclipse /></DI>
          <DI dot><circle cx="39" cy="39" r="38" fill="#de5246" /><path d="M39 39 72 20A38 38 0 0 1 39 77Z" fill="#fbc93f" /><path d="M39 39 39 77A38 38 0 0 1 6 20Z" fill="#21a35b" /><circle cx="39" cy="39" r="18" fill="#fff" /><circle cx="39" cy="39" r="14" fill="#4e8df0" /></DI>
          <DI dot><rect x="38" y="10" width="36" height="60" fill="#f2f2f2" /><path d="M44 20H70M44 30H70M44 40H70M44 50H70" stroke="#3e9163" strokeWidth="7" /><path d="M4 6 42 0V78L4 72Z" fill="#257a4a" /><text x="23" y="50" textAnchor="middle" className="text-[30px] fill-[#e8f5ec]">X</text></DI>
          <div className="mt-[-4px] ml-[16px] mr-[12px] w-[2px] h-[80px] bg-[#3e6189] shrink-0" />
          <DI><rect x="12" y="2" width="52" height="74" fill="#f8f8f8" /><path d="M46 2 64 20V30L70 28V18L52 2Z" fill="#5fc0ee" /><Lines c="#999" x={16} /><text x="18" y="74" className="text-[13px] fill-[#555]">csv</text></DI>
          <DI><Thumb bg="#f4f4f4"><Lines c="#a8a8a8" x={6} /></Thumb><g transform="translate(48 44) scale(0.36)"><Eclipse /></g></DI>
          <DI><Thumb bg="#fdfcf7"><rect x="0" y="16" width="78" height="6" fill="#3d3d6e" /><Lines c="#e8a04a" x={6} /></Thumb><g transform="translate(48 44) scale(0.36)"><Eclipse /></g></DI>
          <DI><rect x="0" y="8" width="78" height="56" fill="#1f7840" stroke="#111" strokeWidth="2" /><rect x="0" y="8" width="78" height="5" fill="#111" /><g transform="translate(0 -6)"><Lines c="#7ad38f" x={6} /></g><rect x="24" y="66" width="34" height="12" rx="6" fill="#3c5c86" /><text x="41" y="76" textAnchor="middle" className="text-[13px] fill-white">java ...</text></DI>
          <DI><rect x="0" y="12" width="78" height="52" fill="#111" /><rect x="3" y="18" width="72" height="42" fill="#fafafa" /><g transform="translate(2 -2)"><Lines c="#777" x={6} /></g></DI>
          <DI><path d="M10 4 68 4 60 74 18 74Z" fill="#dbe5f0" opacity="0.9" /><ellipse cx="39" cy="6" rx="29" ry="5" fill="#f0f4f8" /></DI>
        </div>
      </div>
    </div>
  );
}
